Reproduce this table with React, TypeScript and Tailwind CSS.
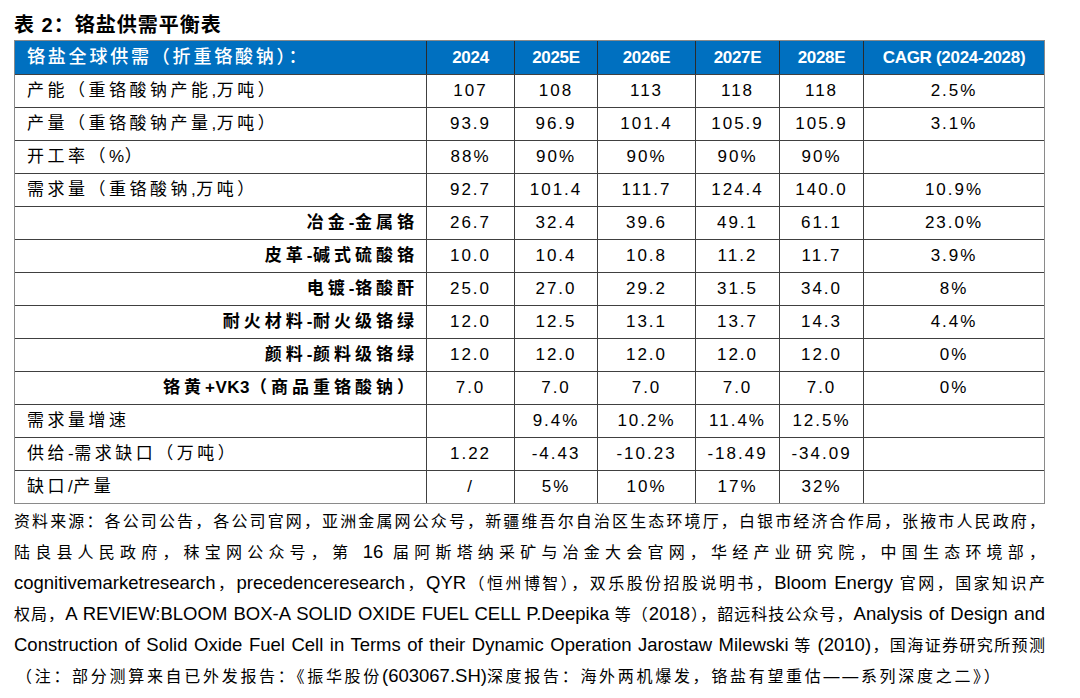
import React from 'react';

const COLS = ['w-[411px]', 'w-[88px]', 'w-[83px]', 'w-[98px]', 'w-[84px]', 'w-[84px]', 'w-[181px]'];

const HEAD = ['2024', '2025E', '2026E', '2027E', '2028E', 'CAGR (2024-2028)'];

type Row = { label: string; sub?: boolean; v: string[] };

const ROWS: Row[] = [
  { label: '产能（重铬酸钠产能,万吨）', v: ['107', '108', '113', '118', '118', '2.5%'] },
  { label: '产量（重铬酸钠产量,万吨）', v: ['93.9', '96.9', '101.4', '105.9', '105.9', '3.1%'] },
  { label: '开工率（%）', v: ['88%', '90%', '90%', '90%', '90%', ''] },
  { label: '需求量（重铬酸钠,万吨）', v: ['92.7', '101.4', '111.7', '124.4', '140.0', '10.9%'] },
  { label: '冶金-金属铬', sub: true, v: ['26.7', '32.4', '39.6', '49.1', '61.1', '23.0%'] },
  { label: '皮革-碱式硫酸铬', sub: true, v: ['10.0', '10.4', '10.8', '11.2', '11.7', '3.9%'] },
  { label: '电镀-铬酸酐', sub: true, v: ['25.0', '27.0', '29.2', '31.5', '34.0', '8%'] },
  { label: '耐火材料-耐火级铬绿', sub: true, v: ['12.0', '12.5', '13.1', '13.7', '14.3', '4.4%'] },
  { label: '颜料-颜料级铬绿', sub: true, v: ['12.0', '12.0', '12.0', '12.0', '12.0', '0%'] },
  { label: '铬黄+VK3（商品重铬酸钠）', sub: true, v: ['7.0', '7.0', '7.0', '7.0', '7.0', '0%'] },
  { label: '需求量增速', v: ['', '9.4%', '10.2%', '11.4%', '12.5%', ''] },
  { label: '供给-需求缺口（万吨）', v: ['1.22', '-4.43', '-10.23', '-18.49', '-34.09', ''] },
  { label: '缺口/产量', v: ['/', '5%', '10%', '17%', '32%', ''] },
];

const NOTES = [
  '资料来源：各公司公告，各公司官网，亚洲金属网公众号，新疆维吾尔自治区生态环境厅，白银市经济合作局，张掖市人民政府，',
  '陆良县人民政府，秣宝网公众号，第 16 届阿斯塔纳采矿与冶金大会官网，华经产业研究院，中国生态环境部，',
  'cognitivemarketresearch，precedenceresearch，QYR（恒州博智），双乐股份招股说明书，Bloom Energy 官网，国家知识产',
  '权局，A REVIEW:BLOOM BOX-A SOLID OXIDE FUEL CELL P.Deepika 等（2018），韶远科技公众号，Analysis of Design and',
  'Construction of Solid Oxide Fuel Cell in Terms of their Dynamic Operation Jarostaw Milewski 等 (2010)，国海证券研究所预测',
];

const LAST_NOTE = '（注：部分测算来自已外发报告：《振华股份(603067.SH)深度报告：海外两机爆发，铬盐有望重估——系列深度之二》）';

// latin runs get their own size, CJK keeps the spaced-out look
function Mixed({ text, latin }: { text: string; latin: string }) {
  const parts = text.split(/([\x21-\x7E][\x20-\x7E]*[\x21-\x7E]|[\x21-\x7E])/);
  return (
    <>
      {parts.map((p, i) =>
        i % 2 === 1 ? (
          <span key={i} className={latin}>
            {p}
          </span>
        ) : (
          <React.Fragment key={i}>{p}</React.Fragment>
        )
      )}
    </>
  );
}

export default function App() {
  return (
    <div className="w-[1080px] h-[698px] bg-white overflow-hidden font-['Liberation_Sans','Noto_Sans_CJK_SC',sans-serif] text-black">
      {/* title */}
      <div className="pl-[14px] pt-[11px] h-[40px] leading-[28px] text-[20px] font-bold tracking-[1px]">
        表 2：铬盐供需平衡表
      </div>

      {/* table */}
      <div className="ml-[14px] w-[1031px] border border-[#8a8a8a]">
        <div className="flex h-[33px] bg-[#0070c0] text-white">
          <div className={`${COLS[0]} flex items-center pl-[12px] text-[18px] tracking-[2.8px] font-medium`}>
            铬盐全球供需（折重铬酸钠）：
          </div>
          {HEAD.map((h, i) => (
            <div
              key={h}
              className={`${COLS[i + 1]} flex items-center justify-center border-l border-[#2b2b2b] text-[17px] font-bold tracking-[-0.3px]`}
            >
              {h}
            </div>
          ))}
        </div>

        {ROWS.map((r) => (
          <div key={r.label} className="flex h-[33px] border-t border-[#404040]">
            <div
              className={
                r.sub
                  ? `${COLS[0]} flex items-center justify-end pr-[8px] text-[17px] font-bold tracking-[4px]`
                  : `${COLS[0]} flex items-center pl-[12px] text-[17px] tracking-[3.5px]`
              }
            >
              <Mixed text={r.label} latin="tracking-[0.5px]" />
            </div>
            {r.v.map((v, i) => (
              <div
                key={i}
                className={`${COLS[i + 1]} flex items-center justify-center border-l border-[#404040] text-[17px] tracking-[2px]`}
              >
                {v}
              </div>
            ))}
          </div>
        ))}
      </div>

      {/* footnote */}
      <div className="ml-[14px] w-[1031px] mt-[2px] text-[16px] leading-[31px]">
        {NOTES.map((n) => (
          <div key={n} className="h-[31px] text-justify [text-align-last:justify]">
            <Mixed text={n} latin="text-[18.5px] leading-none" />
          </div>
        ))}
        <div className="h-[31px] pl-[2px] tracking-[2.7px]">
          <Mixed text={LAST_NOTE} latin="text-[18.5px] leading-none tracking-normal" />
        </div>
      </div>
    </div>
  );
}
